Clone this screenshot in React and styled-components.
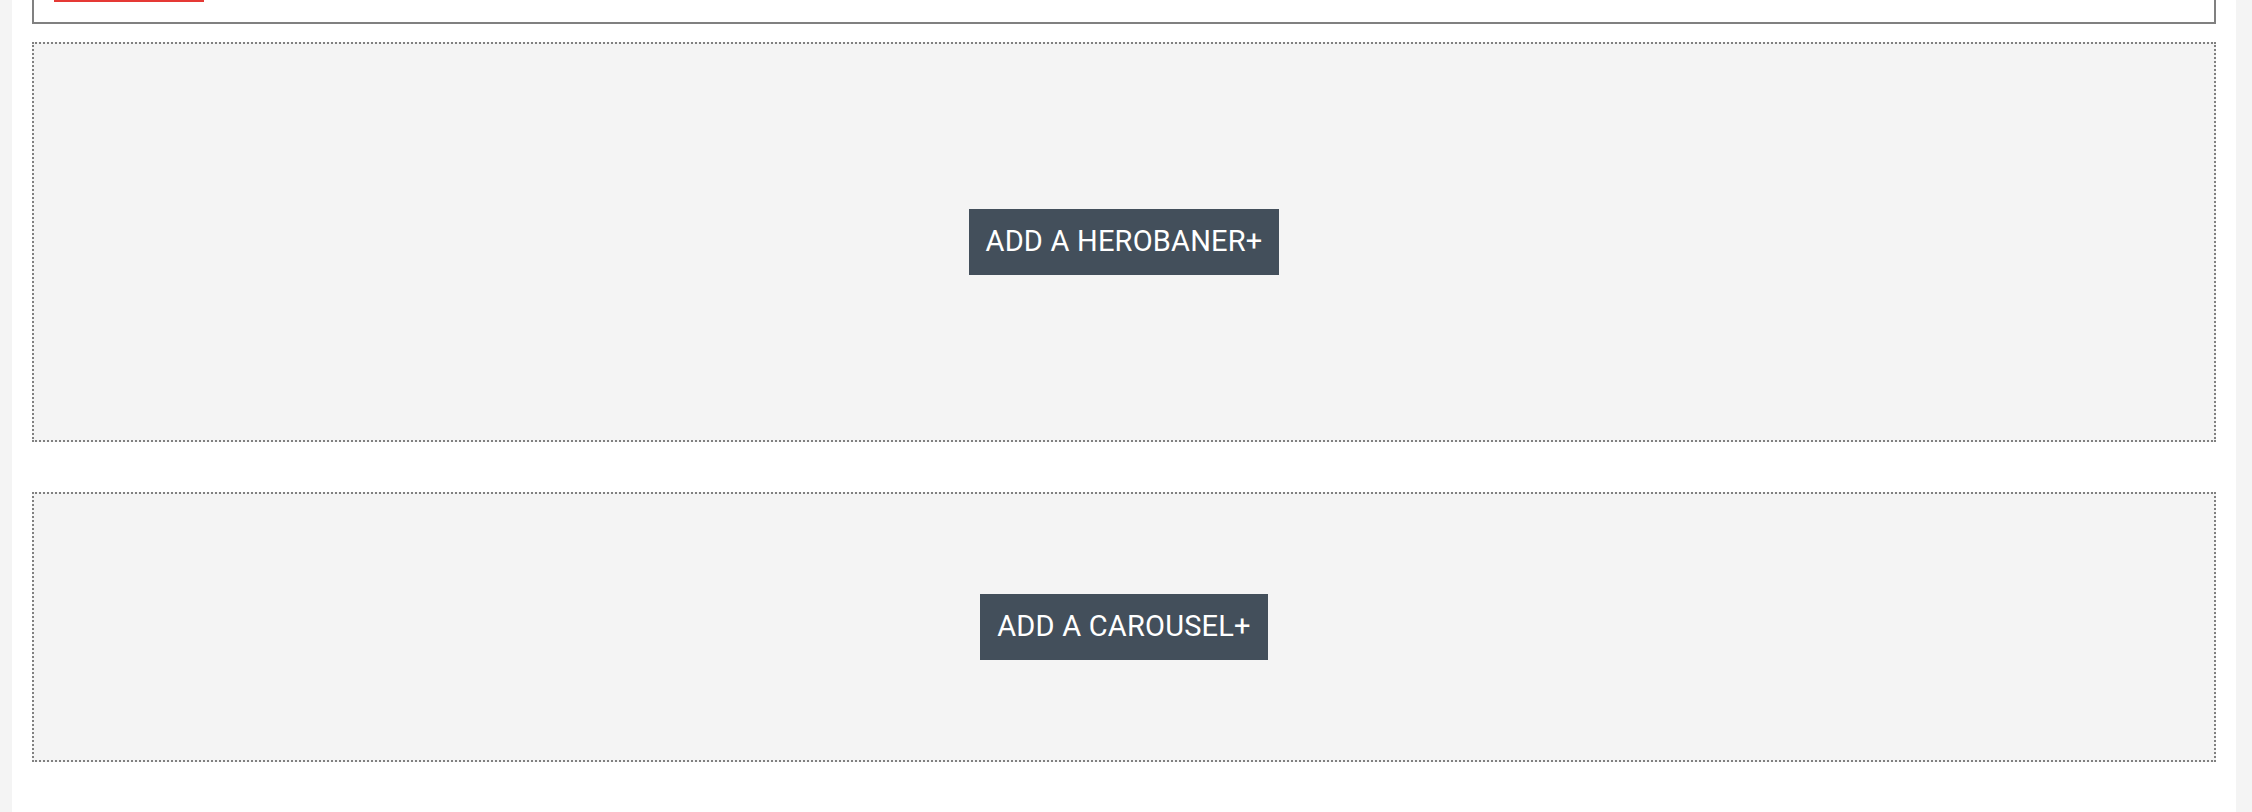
import React from 'react';
import styled, { createGlobalStyle } from 'styled-components';

const GlobalStyle = createGlobalStyle`
  html, body {
    margin: 0;
    padding: 0;
    background-color: #f4f4f4;
    font-family: Roboto, "Liberation Sans", sans-serif;
  }
`;

const Page = styled.div`
  padding-left: 12px;
  height: 812px;
  overflow: hidden;
`;

const Column = styled.div`
  width: 2224px;
  height: 100%;
  background-color: white;
  padding: 0 20px;
  box-sizing: border-box;
  display: flex;
  flex-direction: column;
`;

const TopBox = styled.div`
  height: 22px;
  border: 2px solid #808080;
  border-top: none;
  padding: 0 20px;
`;

const Underline = styled.div`
  width: 150px;
  height: 2px;
  background-color: #e53935;
`;

const Slot = styled.div`
  height: ${(p) => p.height}px;
  margin-top: ${(p) => p.gap}px;
  box-sizing: border-box;
  border: 2px dotted #808080;
  background-color: #f4f4f4;
  display: flex;
  justify-content: center;
  align-items: center;
`;

const Button = styled.div`
  background-color: #434f5b;
  height: 66px;
  box-sizing: border-box;
  padding: 0 17px 2px;
  display: flex;
  align-items: center;
  justify-content: center;
  cursor: pointer;

  span {
    color: white;
    font-family: Roboto, "Liberation Sans", sans-serif;
    font-size: 29px;
    letter-spacing: 0.2px;
  }
`;

export default function App() {
  return (
    <>
      <GlobalStyle />
      <Page>
        <Column>
          <TopBox>
            <Underline />
          </TopBox>
          <Slot height={400} gap={18}>
            <Button>
              <span>ADD A HEROBANER+</span>
            </Button>
          </Slot>
          <Slot height={270} gap={50}>
            <Button>
              <span>ADD A CAROUSEL+</span>
            </Button>
          </Slot>
        </Column>
      </Page>
    </>
  );
}
